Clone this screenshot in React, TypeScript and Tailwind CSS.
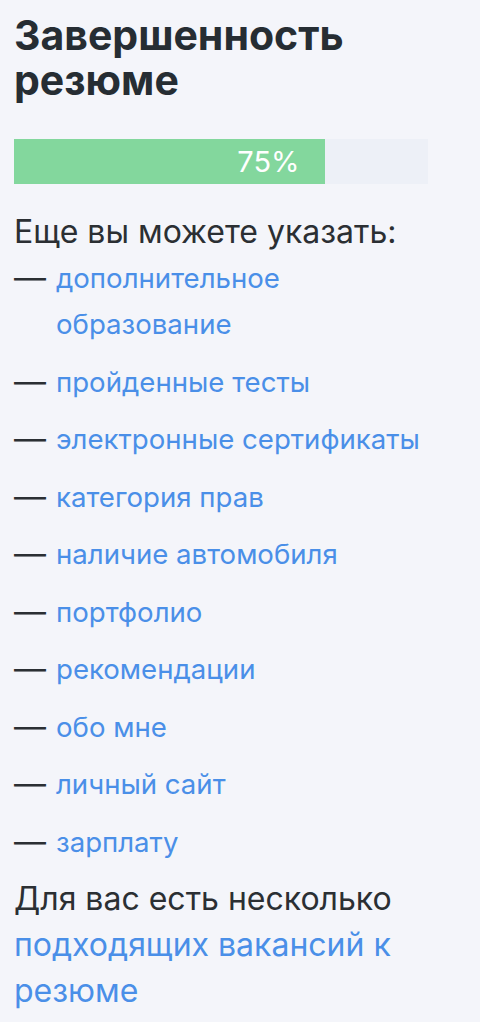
const items = [
  "дополнительное образование",
  "пройденные тесты",
  "электронные сертификаты",
  "категория прав",
  "наличие автомобиля",
  "портфолио",
  "рекомендации",
  "обо мне",
  "личный сайт",
  "зарплату",
];

export default function App() {
  return (
    <div className="min-h-[1022px] bg-[#f4f5fa] px-[14px] pt-[13px] font-['Inter',sans-serif] text-[#2b2f33]">
      <h1 className="text-[41px] font-bold leading-[45px] text-[#262d33]">
        Завершенность резюме
      </h1>

      <div className="mt-[36px] flex h-[45px] w-[414px] bg-[#edf0f7]">
        <div className="flex h-full w-[75%] items-center justify-end bg-[#83d79d] pr-[25px] text-[29px] text-white">
          75%
        </div>
      </div>

      <p className="mt-[25px] text-[32px] leading-[46px]">Еще вы можете указать:</p>
      <ul className="flex flex-col gap-[11.5px] pr-[20px]">
        {items.map((t) => (
          <li key={t} className="flex leading-[46px]">
            <span className="w-[42px] shrink-0 text-[32px]">—</span>
            <a href="#" className="text-[27.6px] text-[#4a8fe8]">
              {t}
            </a>
          </li>
        ))}
      </ul>

      <p className="mt-[11px] text-[32px] leading-[46px]">
        Для вас есть несколько{" "}
        <a href="#" className="text-[#4a8fe8]">
          подходящих вакансий к резюме
        </a>
      </p>
    </div>
  );
}
